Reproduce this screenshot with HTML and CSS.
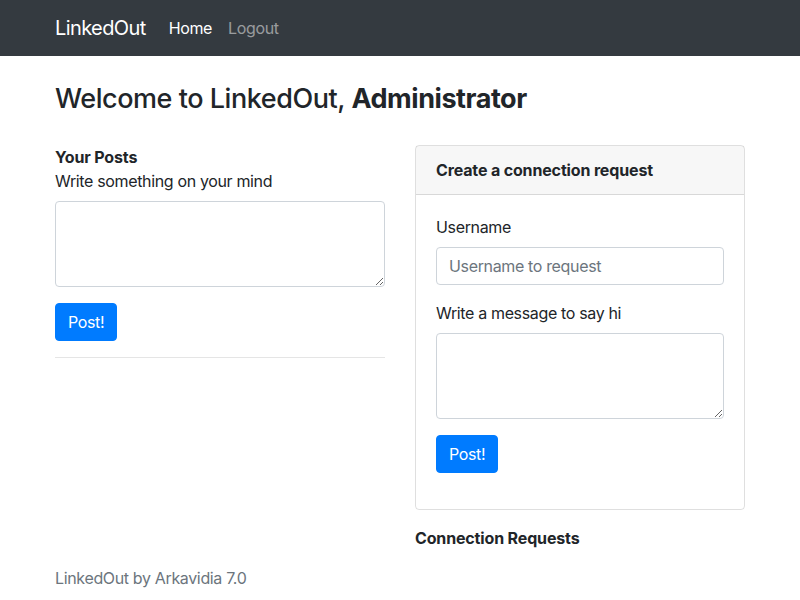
FILE: index.html
```html
<!DOCTYPE html>
<html lang="en">
<head>
<meta charset="utf-8">
<title>LinkedOut</title>
<link rel="stylesheet" href="styles.css">
</head>
<body>
<nav class="navbar">
  <div class="container nav-inner">
    <a class="brand" href="#">LinkedOut</a>
    <a class="nav-link active" href="#">Home</a>
    <a class="nav-link" href="#">Logout</a>
  </div>
</nav>
<main class="container main">
  <h2 class="title">Welcome to LinkedOut, <b>Administrator</b></h2>
  <div class="row">
    <div class="col">
      <form class="post-form">
        <div class="section-title">Your Posts</div>
        <div class="form-group">
          <label class="label">Write something on your mind</label>
          <textarea class="control area" rows="3"></textarea>
        </div>
        <button type="button" class="btn">Post!</button>
      </form>
      <hr class="divider">
    </div>
    <div class="col">
      <div class="card">
        <div class="card-header">Create a connection request</div>
        <div class="card-body">
          <div class="form-group">
            <label class="label">Username</label>
            <input class="control input" type="text" placeholder="Username to request">
          </div>
          <div class="form-group">
            <label class="label">Write a message to say hi</label>
            <textarea class="control area" rows="3"></textarea>
          </div>
          <div class="form-group">
            <button type="button" class="btn">Post!</button>
          </div>
        </div>
      </div>
      <div class="section-title requests">Connection Requests</div>
    </div>
  </div>
  <footer class="footer">LinkedOut by Arkavidia 7.0</footer>
</main>
</body>
</html>
```
FILE: styles.css
```css
* { box-sizing: border-box; }
html, body { margin: 0; padding: 0; }
body {
  font-family: Inter, "Liberation Sans", sans-serif;
  font-size: 16px;
  line-height: 24px;
  letter-spacing: -0.35px;
  color: #212529;
  background: #fff;
}
.container {
  width: 720px;
  margin: 0 auto;
  padding: 0 15px;
}
.navbar {
  background: #343a40;
  height: 56px;
}
.nav-inner {
  display: flex;
  align-items: center;
  height: 56px;
}
.brand {
  color: #fff;
  font-size: 20px;
  line-height: 30px;
  text-decoration: none;
  margin-right: 15px;
  letter-spacing: -0.6px;
}
.nav-link {
  color: rgba(255,255,255,.5);
  text-decoration: none;
  padding: 8px;
  line-height: 24px;
}
.nav-link.active { color: #fff; }
.main { padding-top: 24px; }
.title {
  font-size: 27px;
  font-weight: 500;
  line-height: 38px;
  margin: 0 0 27px;
  letter-spacing: -0.45px;
}
.title b { font-weight: 700; }
.row {
  display: flex;
  margin: 0 -15px;
}
.col {
  width: 360px;
  padding: 0 15px;
}
.post-form { margin: 0; }
.section-title {
  font-weight: 700;
  line-height: 24px;
  letter-spacing: -0.15px;
}
.form-group { margin-bottom: 16px; }
.label {
  display: block;
  margin-bottom: 8px;
}
.control {
  display: block;
  width: 100%;
  font: inherit;
  letter-spacing: inherit;
  color: #495057;
  border: 1px solid #ced4da;
  border-radius: 4px;
  padding: 6px 12px;
  background: #fff;
}
.input { height: 38px; }
.input::placeholder { color: #6c757d; }
.area { height: 86px; resize: vertical; }
.btn {
  font: inherit;
  letter-spacing: inherit;
  color: #fff;
  background: #007bff;
  border: 1px solid #007bff;
  border-radius: 4px;
  padding: 6px 12px;
  height: 38px;
  line-height: 24px;
  cursor: pointer;
}
.divider {
  border: 0;
  border-top: 1px solid rgba(0,0,0,.1);
  margin: 16px 0;
}
.card {
  border: 1px solid rgba(0,0,0,.125);
  border-radius: 4px;
}
.card-header {
  background: rgba(0,0,0,.03);
  border-bottom: 1px solid rgba(0,0,0,.125);
  padding: 12px 20px;
  font-weight: 700;
  letter-spacing: -0.15px;
}
.card-body { padding: 20px; }
.requests { margin-top: 16px; }
.footer {
  color: #6c757d;
  margin-top: 16px;
  padding-bottom: 16px;
}
```
